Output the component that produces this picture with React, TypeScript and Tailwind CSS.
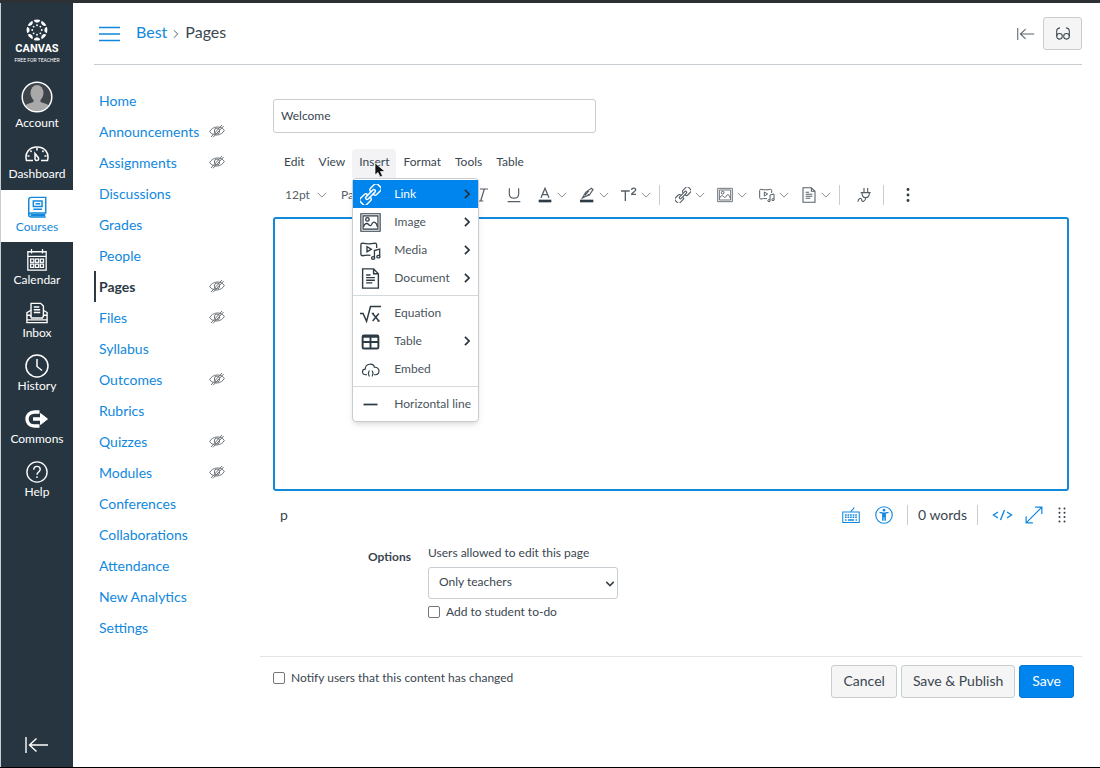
import type { ReactNode } from "react"

type IconProps = { className?: string }

const Svg = ({ className = "size-5", width = 1.5, box = "0 0 24 24", children }: { className?: string; width?: number; box?: string; children: ReactNode }) => (
  <svg className={className} viewBox={box} fill="none" stroke="currentColor" strokeWidth={width} aria-hidden="true">
    {children}
  </svg>
)

const LogoIcon = () => (
  <svg className="size-[22px]" viewBox="-12 -12 24 24" fill="currentColor" aria-hidden="true">
    {[0, 45, 90, 135, 180, 225, 270, 315].map((angle) => (
      <g key={angle} transform={`rotate(${angle})`}>
        <path d="M-3.6 -10.8 A11.4 11.4 0 0 1 3.6 -10.8 A3.7 3.7 0 0 1 -3.6 -10.8Z" />
        <circle cx="0" cy="-5.2" r="1" />
      </g>
    ))}
  </svg>
)

const AvatarIcon = () => (
  <svg className="size-8" viewBox="0 0 32 32" aria-hidden="true">
    <clipPath id="avatar">
      <circle cx="16" cy="16" r="14" />
    </clipPath>
    <circle cx="16" cy="16" r="14.5" fill="#3d454b" />
    <g clipPath="url(#avatar)" fill="#aaa9aa">
      <ellipse cx="16" cy="12" rx="6.5" ry="8" />
      <path d="M12.500 17h7v4l6 2c3 1 4 4 4 9H2.500c0-5 1-8 4-9l6-2z" />
    </g>
    <circle cx="16" cy="16" r="14.800" fill="none" stroke="#fff" strokeWidth="1.500" />
  </svg>
)

const DashboardIcon = () => (
  <Svg className="h-4 w-6" box="0 0 24 16">
    <path d="M8 14.500H1.500C-.5 7 4 1 12 1s12.500 6 10.500 13.500H16" />
    <path d="M10 7.500l3.500 4.500c1 2.500-3 3.500-3.500 1z" />
    <path d="M12 2v2.500M5.500 4.500l1 1.500M18.500 4.500l-1 1.500M2.500 10h2M19.500 10h2" />
  </Svg>
)

const CoursesIcon = () => (
  <Svg className="size-[22px]" width={1.6}>
    <path d="M6 1.500h15.500v17H6c-4 0-4 4.500 0 4.500h15.500M3 20.500V4c0-1.500 1-2.500 3-2.500" />
    <path d="M8 5.500h9.500v6H8zM10.500 8.500h5M8 14.500h9.500" />
    <path d="M5 20.800h16" strokeWidth="2.500" />
  </Svg>
)

const CalendarIcon = () => (
  <Svg className="size-[22px]" width={1.4}>
    <path d="M2 3h20v20H2zM2 8h20M6 0v5M18 0v5" />
    {[11, 16.5].map((y) => [5, 10.3, 15.6].map((x) => <rect key={`${x}-${y}`} x={x} y={y} width="3.500" height="3.500" />))}
  </Svg>
)

const InboxIcon = () => (
  <Svg className="size-[22px]" width={1.5}>
    <path d="M5.500 16V1.500H16l3 3V16M8.500 5.500h6M8.500 8.500h7M8.500 11.500h7" />
    <path d="M5.500 9L1 11.500v11h22v-11L19 9M1 14.500h3.500l1.500 3h12l1.500-3H23M1 19.500h22" />
  </Svg>
)

const HistoryIcon = () => (
  <Svg className="size-6">
    <circle cx="12" cy="12" r="11" />
    <path d="M12 5v7.500l5 4" />
  </Svg>
)

const CommonsIcon = () => (
  <Svg className="h-[18px] w-6" width={3.4} box="0 0 24 18">
    <path d="M14.500 2H9.500C-.5 2-.5 16 9.500 16h5M8 9h9" />
    <path d="M15.500 3.500L22.500 9l-7 5.500z" fill="currentColor" strokeWidth="1" />
  </Svg>
)

const HelpIcon = () => (
  <Svg className="size-[22px]">
    <circle cx="12" cy="12" r="11" />
    <path d="M8.500 9.500c0-5 7-4.500 7-.5 0 3-3.500 3-3.500 6M12 16.500v2" />
  </Svg>
)

const CollapseIcon = ({ className = "h-4 w-6" }: IconProps) => (
  <Svg className={className} width={1.4} box="0 0 24 16">
    <path d="M1 0v16M23 8H4.500M11.500 1.500L4.500 8l7 6.500" />
  </Svg>
)

const HiddenIcon = () => (
  <Svg className="mb-0.5 h-[14px] w-4 text-[#6f757a]" width={1.5} box="0 0 24 21">
    <path d="M1 11.500C5 3 18 2 23 9.500 19 18 6 19 1 11.500zM3 19.500L19.500 1.500M6 20L22 3" />
    <ellipse cx="12" cy="10.500" rx="4" ry="4.500" />
  </Svg>
)

const LinkIcon = ({ className }: IconProps) => (
  <Svg className={className} width={1.7}>
    <g transform="rotate(-45 12 12)">
      <path d="M9.500 10V9.500a2.500 2.500 0 0 0-2.500-2.500H.500A2.500 2.500 0 0 0-2 9.500v5A2.500 2.500 0 0 0 .500 17H7a2.500 2.500 0 0 0 2.500-2.500V14" />
      <path d="M14.500 10V9.500a2.500 2.500 0 0 1 2.500-2.500h6.500A2.500 2.500 0 0 1 26 9.500v5a2.500 2.500 0 0 1-2.500 2.500H17a2.500 2.500 0 0 1-2.500-2.500V14" />
      <path d="M6.500 10.300h11a1.700 1.700 0 0 1 0 3.400h-11a1.700 1.700 0 0 1 0-3.400z" />
    </g>
  </Svg>
)

const ImageIcon = ({ className }: IconProps) => (
  <Svg className={className} width={1.5}>
    <path d="M1 2h22v20H1zM3.500 4.500h17v15h-17z" strokeWidth="1.300" />
    <circle cx="8.500" cy="8.500" r="2" />
    <path d="M4 17c1-4 4-5 6-2.500 2 2 3 1 4-1.500 2-3 5-1 6 4" />
  </Svg>
)

const MediaIcon = ({ className }: IconProps) => (
  <Svg className={className}>
    <path d="M12 17.500c-4-.5-7 0-9 .5-1.500 0-2-.5-2-2V5.500c0-1.500.5-2 2-2 4 1 10 1 14 0 1.500 0 2 .5 2 2V9M8 7.500v6l5-3z" />
    <path d="M16.500 20v-8l6-1.500v8" />
    <ellipse cx="15" cy="20.500" rx="1.800" ry="1.500" />
    <ellipse cx="21" cy="19" rx="1.800" ry="1.500" />
  </Svg>
)

const DocumentIcon = ({ className }: IconProps) => (
  <Svg className={className} width={1.6}>
    <path d="M3 1h12.500L21 6.500V23H3zM15.500 1v5.500H21M7 8h5M7 11h10M7 14h10M7 17h7" />
  </Svg>
)

const EquationIcon = ({ className }: IconProps) => (
  <Svg className={className} width={1.7}>
    <path d="M0 12h3.500l4 9L12 4h12M14.500 12l7 8.500M21.500 12l-7 8.500M13.500 12h2.500M20 20.500h2.500" />
  </Svg>
)

const TableIcon = ({ className }: IconProps) => (
  <Svg className={className} width={2.2}>
    <rect x="3" y="5" width="18" height="15" rx="1.500" />
    <path d="M3 6.500h18M3 12.500h18M12 6v14" />
  </Svg>
)

const EmbedIcon = ({ className }: IconProps) => (
  <Svg className={className} width={1.3}>
    <path d="M8 18H6.500C1.500 18 2 11.500 6 11.500 6 5 15.500 4 16.500 9.500c6-1 7.500 8.500 1 8.500H16M11 13.500c-2 0 0 3-2 3 2 0 0 3 2 3M13.500 13.500c2 0 0 3 2 3-2 0 0 3-2 3" />
  </Svg>
)

const LineIcon = ({ className }: IconProps) => (
  <Svg className={className} width={2}>
    <path d="M4 12h16" />
  </Svg>
)

const ChevronDown = () => (
  <Svg className="size-[10px] text-[#8b9095]" width={2.4}>
    <path d="M2 7l10 10L22 7" />
  </Svg>
)

const UnderlineIcon = () => (
  <Svg className="size-4" width={1.8}>
    <path d="M5 2v8c0 9 14 9 14 0V2M2.500 22h19" />
  </Svg>
)

const ItalicIcon = () => (
  <Svg className="size-4" width={1.8}>
    <path d="M9 3h12M15.500 3L10 21M5 21h9" />
  </Svg>
)

const BoldIcon = () => (
  <Svg className="size-4" width={2.4}>
    <path d="M6 3v18h8c6 0 6-9 0-9H6h7c5 0 5-9 0-9z" />
  </Svg>
)

const TextColorIcon = () => (
  <Svg className="size-4" width={2}>
    <path d="M6 16L12 2l6 14M8 11.500h8" />
    <path d="M2.500 21h19" stroke="#2d3b45" strokeWidth="4" />
  </Svg>
)

const HighlightIcon = () => (
  <Svg className="size-4" width={1.8}>
    <path d="M5 16.500L10 8l8.500-6 2.500 2-5.500 8-6.500 2.500zM10 8l5.500 4M9 12.500l6-7" />
    <path d="M1.500 21h20" stroke="#2d3b45" strokeWidth="4" />
  </Svg>
)

const SuperscriptIcon = () => (
  <Svg className="size-4" width={2}>
    <path d="M0 6h13M6.500 6v15" />
    <path d="M16 4.500c0-4 6-3.500 6 0 0 2-6 4-6 6.500h6.500" />
  </Svg>
)

const PlugIcon = () => (
  <Svg className="size-4" width={1.7}>
    <path d="M7 8.500h15M9 9c0 5 2 7 5.500 7S20 14 20 9M12 1.500v7M17.500 1.500v7M14.500 16c0 6-6 7-6 3.500 0-4-5.500-3-5.500 2.500" />
  </Svg>
)

const MoreIcon = () => (
  <svg className="size-4" viewBox="0 0 16 16" fill="#2d3b45" aria-hidden="true">
    {[2.5, 8, 13.5].map((y) => <circle key={y} cx="8" cy={y} r="1.400" />)}
  </svg>
)

const GlassesIcon = () => (
  <Svg className="size-[14px]" width={1.8}>
    <circle cx="6" cy="16" r="4.800" />
    <circle cx="18" cy="16" r="4.800" />
    <path d="M1.200 16V7c0-3 2-5 5.500-5.500M22.800 16V7c0-3-2-5-5.500-5.500" />
  </Svg>
)

const KeyboardIcon = () => (
  <Svg className="size-[18px]" width={1.4}>
    <path d="M1 8h22v14H1zM12 8c0-4 4-2 4-6.500" />
    <path d="M4 12h16M4 15h16" strokeWidth="2.200" strokeDasharray="2.200 1.200" />
    <path d="M4 18.500h2M8 18.500h8M18 18.500h2" strokeWidth="2" />
  </Svg>
)

const AccessibilityIcon = () => (
  <Svg className="size-[18px]" width={1.5}>
    <circle cx="12" cy="12" r="11" />
    <circle cx="12" cy="5.500" r="1.800" fill="currentColor" stroke="none" />
    <path d="M6 8.500l4.500 1v10M18 8.500l-4.500 1v10M10.500 9.500h3M12 9v6" strokeWidth="2" />
  </Svg>
)

const CodeIcon = () => (
  <Svg className="h-[14px] w-[21px]" width={1.4} box="0 0 21 14">
    <path d="M6 4L1.500 7 6 10M15 4L19.500 7 15 10M12.500 2l-4 10" />
  </Svg>
)

const ExpandIcon = () => (
  <Svg className="size-[18px]" width={1.6}>
    <path d="M1.500 22.500l21-21M13.500 1.500h9v9M1.500 13.500v9h9" />
  </Svg>
)

const GripIcon = () => (
  <svg className="h-4 w-2" viewBox="0 0 8 16" fill="#2d3b45" aria-hidden="true">
    {[1.5, 5.8, 10.1, 14.4].map((y) => [1.5, 6.5].map((x) => <circle key={`${x}-${y}`} cx={x} cy={y} r="1" />))}
  </svg>
)

const globalLinks = [
  { label: "Dashboard", icon: <DashboardIcon /> },
  { label: "Courses", icon: <CoursesIcon />, active: true },
  { label: "Calendar", icon: <CalendarIcon /> },
  { label: "Inbox", icon: <InboxIcon /> },
  { label: "History", icon: <HistoryIcon /> },
  { label: "Commons", icon: <CommonsIcon /> },
  { label: "Help", icon: <HelpIcon /> },
]

const courseLinks = [
  { label: "Home" },
  { label: "Announcements", hidden: true },
  { label: "Assignments", hidden: true },
  { label: "Discussions" },
  { label: "Grades" },
  { label: "People" },
  { label: "Pages", hidden: true, active: true },
  { label: "Files", hidden: true },
  { label: "Syllabus" },
  { label: "Outcomes", hidden: true },
  { label: "Rubrics" },
  { label: "Quizzes", hidden: true },
  { label: "Modules", hidden: true },
  { label: "Conferences" },
  { label: "Collaborations" },
  { label: "Attendance" },
  { label: "New Analytics" },
  { label: "Settings" },
]

const insertGroups = [
  [
    { label: "Link", Icon: LinkIcon, more: true, active: true },
    { label: "Image", Icon: ImageIcon, more: true },
    { label: "Media", Icon: MediaIcon, more: true },
    { label: "Document", Icon: DocumentIcon, more: true },
  ],
  [
    { label: "Equation", Icon: EquationIcon },
    { label: "Table", Icon: TableIcon, more: true },
    { label: "Embed", Icon: EmbedIcon },
  ],
  [{ label: "Horizontal line", Icon: LineIcon }],
]

const GlobalNav = () => (
  <nav className="flex w-[73px] shrink-0 flex-col items-stretch border-l border-[#c7cdd1] bg-[#273540] text-[12px] text-white">
    <a href="#home" className="flex h-[70px] flex-col items-center pt-4 font-['Roboto',sans-serif]">
      <LogoIcon />
      <span className="text-[11px] leading-4 font-bold">CANVAS</span>
      <span className="text-[5px] leading-[6px] whitespace-nowrap">FREE FOR TEACHER</span>
    </a>
    <a href="#account" className="flex h-16 flex-col items-center justify-end pb-1">
      <AvatarIcon />
      <span className="leading-5">Account</span>
    </a>
    <div className="flex flex-col gap-px">
      {globalLinks.map((item) => (
        <a key={item.label} href="#nav" className={`flex h-[52px] flex-col items-center ${item.active ? "bg-white text-[#1188dd]" : ""}`}>
          <span className="mt-[5px] flex h-6 items-center">{item.icon}</span>
          <span className="leading-4">{item.label}</span>
        </a>
      ))}
    </div>
    <button className="mt-auto flex h-11 items-center justify-center" aria-label="Collapse navigation">
      <CollapseIcon />
    </button>
  </nav>
)

const CourseNav = () => (
  <nav className="w-[166px] shrink-0 pt-5 text-[14px]">
    {courseLinks.map((item) => (
      <a
        key={item.label}
        href="#course"
        className={`flex h-[31px] items-center justify-between border-l-2 pr-[35px] pl-[3px] whitespace-nowrap ${item.active ? "border-[#2d3b45] font-bold text-[#2d3b45]" : "border-transparent text-[#1188dd]"}`}
      >
        {item.label}
        {item.hidden && <HiddenIcon />}
      </a>
    ))}
  </nav>
)

const InsertMenu = () => (
  <div className="absolute top-[29px] left-0 z-10 w-[127px] rounded-sm border border-[#c7cdd1] bg-white pt-px pb-[3px] shadow-md" role="menu">
    {insertGroups.map((group, i) => (
      <div key={i} className={i > 0 ? "mt-[3px] border-t border-[#d5d9dc] pt-[3px]" : ""}>
        {group.map(({ label, Icon, more, active }: { label: string; Icon: (p: IconProps) => ReactNode; more?: boolean; active?: boolean }) => (
          <button key={label} role="menuitem" type="button" className={`flex h-7 w-full items-center pr-[6px] pl-[7px] text-left whitespace-nowrap ${active ? "bg-[#0084ee] text-white" : "text-[#4a545c]"}`}>
            <Icon className={`mr-[13px] size-[21px] shrink-0 ${active ? "text-white" : "text-[#2d3b45]"}`} />
            {label}
            {more && (
              <Svg className="ml-auto size-[10px] text-[#26323b]" width={4}>
                <path d="M7 2l10 10L7 22" />
              </Svg>
            )}
          </button>
        ))}
      </div>
    ))}
  </div>
)

const MenuBar = () => (
  <div className="mt-4 flex h-[29px] px-1">
    {["Edit", "View", "Insert", "Format", "Tools", "Table"].map((label) => (
      <div key={label} className="relative">
        <button type="button" className={`h-[29px] px-[7px] pb-[3px] ${label === "Insert" ? "rounded-t-sm bg-[#f3f2f4]" : ""}`}>{label}</button>
        {label === "Insert" && (
          <>
            <InsertMenu />
            <svg className="absolute top-[13px] left-[22px] z-20 h-4 w-3" viewBox="0 0 12 16" aria-hidden="true">
              <path d="M1 1v12l3-2.500L6 15l2.500-1-2-4.500H11z" fill="#111" stroke="#fff" strokeWidth=".7" />
            </svg>
          </>
        )}
      </div>
    ))}
  </div>
)

const Divider = () => <span className="mr-2 ml-[3px] h-5 w-px bg-[#c7cdd1]" />

const Tool = ({ label, children }: { label: string; children: ReactNode }) => (
  <button type="button" aria-label={label} className="flex h-full w-[42px] shrink-0 items-center gap-1 pl-[7px]">
    {children}
    <ChevronDown />
  </button>
)

const PlainTool = ({ label, children }: { label: string; children: ReactNode }) => (
  <button type="button" aria-label={label} className="flex h-full w-8 shrink-0 items-center justify-center">
    {children}
  </button>
)

const Toolbar = () => (
  <div className="flex h-[34px] items-center pl-[6px] text-[#565f67]">
    <button type="button" className="flex w-14 items-center justify-between pr-2 pl-[6px]">12pt<ChevronDown /></button>
    <button type="button" className="flex w-[99px] items-center justify-between pr-2 pl-[6px]">Paragraph<ChevronDown /></button>
    <PlainTool label="Bold"><BoldIcon /></PlainTool>
    <PlainTool label="Italic"><ItalicIcon /></PlainTool>
    <PlainTool label="Underline"><UnderlineIcon /></PlainTool>
    <Tool label="Text color"><TextColorIcon /></Tool>
    <Tool label="Background color"><HighlightIcon /></Tool>
    <Tool label="Superscript"><SuperscriptIcon /></Tool>
    <Divider />
    <Tool label="Links"><LinkIcon className="size-4" /></Tool>
    <Tool label="Images"><ImageIcon className="size-4" /></Tool>
    <Tool label="Media"><MediaIcon className="size-4" /></Tool>
    <Tool label="Documents"><DocumentIcon className="size-4" /></Tool>
    <Divider />
    <PlainTool label="Apps"><PlugIcon /></PlainTool>
    <Divider />
    <PlainTool label="More"><MoreIcon /></PlainTool>
  </div>
)

const StatusBar = () => (
  <div className="flex h-[49px] items-center pr-[3px] pb-0.5 pl-[7px] text-[14px]">
    <span>p</span>
    <div className="ml-auto flex items-center text-[#1188dd]">
      <button type="button" aria-label="Keyboard shortcuts"><KeyboardIcon /></button>
      <button type="button" aria-label="Accessibility checker" className="ml-[15px]"><AccessibilityIcon /></button>
      <span className="ml-[14px] h-5 w-px bg-[#c7cdd1]" />
      <span className="mx-[10px] text-[#3a4650]">0 words</span>
      <span className="h-5 w-px bg-[#c7cdd1]" />
      <button type="button" aria-label="HTML editor" className="ml-[14px]"><CodeIcon /></button>
      <button type="button" aria-label="Fullscreen" className="ml-3"><ExpandIcon /></button>
      <button type="button" aria-label="Resize" className="ml-[15px]"><GripIcon /></button>
    </div>
  </div>
)

const checkbox = "size-3 shrink-0 appearance-none rounded-[2px] border border-[#767676] bg-white"
const button = "h-[33px] rounded-[3px] border pb-0.5 text-[14px]"

const EditForm = () => (
  <form className="min-w-0 flex-1 text-[12px]">
    <div className="pr-[13px] pl-[13px]">
      <input aria-label="Page title" defaultValue="Welcome" className="mt-[34px] block h-[34px] w-[323px] rounded-[3px] border border-[#c7cdd1] px-[7px] pb-0.5" />
      <MenuBar />
      <Toolbar />
      <textarea aria-label="Page content" className="mt-[5px] block h-[274px] w-full resize-none rounded-[3px] border-2 border-[#1389d9] outline-none" />
      <StatusBar />
      <div className="mt-[3px] flex pl-[95px]">
        <span className="mt-1 mr-[17px] leading-5 font-bold">Options</span>
        <div>
          <label htmlFor="editors" className="block leading-5">Users allowed to edit this page</label>
          <div className="relative mt-1 w-[190px]">
            <select id="editors" className="h-8 w-full appearance-none rounded-[3px] border border-[#c7cdd1] bg-white pb-0.5 pl-[10px]">
              <option>Only teachers</option>
            </select>
            <Svg className="absolute top-3 right-[3px] size-[10px]" width={4}>
              <path d="M3 7l9 9 9-9" />
            </Svg>
          </div>
          <label className="mt-[3px] flex items-center gap-[6px] leading-5">
            <input type="checkbox" className={checkbox} />
            Add to student to-do
          </label>
        </div>
      </div>
    </div>
    <div className="mt-[34px] flex items-start border-t border-[#e2e5e7] pt-2 pr-2 pl-[13px]">
      <label className="mt-[3px] flex items-center gap-[6px] leading-5">
        <input type="checkbox" className={checkbox} />
        Notify users that this content has changed
      </label>
      <div className="ml-auto flex gap-1">
        <button type="button" className={`${button} border-[#c7cdd1] bg-[#f5f5f5] px-[11px]`}>Cancel</button>
        <button type="button" className={`${button} border-[#c7cdd1] bg-[#f5f5f5] px-[11px]`}>Save & Publish</button>
        <button type="button" className={`${button} border-[#0077d6] bg-[#0084ee] px-3 text-white`}>Save</button>
      </div>
    </div>
  </form>
)

export default function App() {
  return (
    <div className="flex min-h-screen border-t-[3px] border-b border-[#2d3135] border-b-black bg-white font-['Lato',sans-serif] text-[#3a4650]">
      <GlobalNav />
      <div className="min-w-0 flex-1 pr-[18px] pl-[21px]">
        <header className="flex h-[62px] items-center border-b border-[#c7cdd1] pl-[5px] text-[16px]">
          <button aria-label="Course navigation" className="mr-4 text-[#1188dd]">
            <Svg className="h-4 w-[21px]" box="0 0 21 16" width={1.5}>
              <path d="M0 1.500h21M0 8h21M0 14.500h21" />
            </Svg>
          </button>
          <div className="flex items-center pb-1">
            <a href="#best" className="text-[#1188dd]">Best</a>
            <Svg className="mx-1 mt-1 size-[10px] text-[#73818c]" width={2.5}>
              <path d="M7 3l9 9-9 9" />
            </Svg>
            <span>Pages</span>
          </div>
          <button aria-label="Collapse" className="ml-auto text-[#5a646c]"><CollapseIcon className="h-3 w-[18px]" /></button>
          <button aria-label="Student view" className="ml-2 flex h-[33px] w-[39px] items-center justify-center rounded-[3px] border border-[#c7cdd1] bg-[#f5f5f5]">
            <GlassesIcon />
          </button>
        </header>
        <div className="flex">
          <CourseNav />
          <EditForm />
        </div>
      </div>
    </div>
  )
}
